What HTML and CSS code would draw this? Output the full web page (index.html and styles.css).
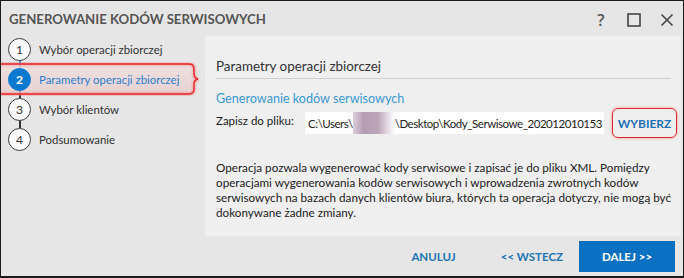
FILE: index.html
```html
<!DOCTYPE html>
<html lang="pl">
<head>
<meta charset="utf-8">
<title>Generowanie kodów serwisowych</title>
<link rel="stylesheet" href="styles.css">
</head>
<body>
<div class="window">
  <header class="titlebar">
    <h1 class="title">GENEROWANIE KODÓW SERWISOWYCH</h1>
    <div class="controls">
      <span class="ctl help">?</span>
      <span class="ctl max"><svg width="14" height="14" viewBox="0 0 14 14"><rect x="1" y="1" width="12" height="12" fill="none" stroke="#444" stroke-width="1.6"/></svg></span>
      <span class="ctl close"><svg width="14" height="14" viewBox="0 0 14 14"><path d="M1.5 1.5 L12.5 12.5 M12.5 1.5 L1.5 12.5" stroke="#444" stroke-width="1.6" fill="none"/></svg></span>
    </div>
  </header>
  <div class="main">
    <nav class="steps">
      <div class="step"><span class="num">1</span><span class="label">Wybór operacji zbiorczej</span></div>
      <div class="link link-done"></div>
      <div class="step active"><span class="num">2</span><span class="label">Parametry operacji zbiorczej</span></div>
      <div class="link"></div>
      <div class="step"><span class="num">3</span><span class="label">Wybór klientów</span></div>
      <div class="link"></div>
      <div class="step"><span class="num">4</span><span class="label">Podsumowanie</span></div>
      <svg class="mark-step" width="206" height="34" viewBox="0 0 206 34">
        <defs>
          <linearGradient id="pink" x1="0" y1="0" x2="0" y2="1">
            <stop offset="0" stop-color="#f1dede"/>
            <stop offset="1" stop-color="#e6cfcf"/>
          </linearGradient>
          <filter id="glow" x="-5%" y="-30%" width="110%" height="160%"><feGaussianBlur stdDeviation="1.2"/></filter>
        </defs>
        <path d="M-4 2 H188 Q193 2 193 7 V12 Q193 16 197 17 Q193 18 193 22 V27 Q193 32 188 32 H-4 Z" fill="url(#pink)" stroke="#f08a8a" stroke-width="3" filter="url(#glow)" opacity="0.8"/>
        <path d="M-4 2 H188 Q193 2 193 7 V12 Q193 16 197 17 Q193 18 193 22 V27 Q193 32 188 32 H-4" fill="none" stroke="#e8282e" stroke-width="1.4"/>
      </svg>
    </nav>
    <section class="panel">
      <h2 class="heading">Parametry operacji zbiorczej</h2>
      <h3 class="subheading">Generowanie kodów serwisowych</h3>
      <div class="file-row">
        <span class="file-label">Zapisz do pliku:</span>
        <div class="file-input"><span>C:\Users\</span><span class="blur"></span><span>\Desktop\Kody_Serwisowe_202012010153</span></div>
        <button class="pick">WYBIERZ</button>
      </div>
      <p class="desc">Operacja pozwala wygenerować kody serwisowe i zapisać je do pliku XML. Pomiędzy operacjami wygenerowania kodów serwisowych i wprowadzenia zwrotnych kodów serwisowych na bazach danych klientów biura, których ta operacja dotyczy, nie mogą być dokonywane żadne zmiany.</p>
    </section>
  </div>
  <footer class="footer">
    <button class="btn-text">ANULUJ</button>
    <button class="btn-text">&lt;&lt; WSTECZ</button>
    <button class="btn-primary">DALEJ &gt;&gt;</button>
  </footer>
</div>
</body>
</html>
```
FILE: styles.css
```css
* { box-sizing: border-box; }
html, body { margin: 0; padding: 0; }
body {
  width: 684px;
  height: 278px;
  font-family: Lato, "Open Sans", sans-serif;
  color: #2b2b2b;
  background: #e6e6e6;
  overflow: hidden;
}
.window {
  width: 684px;
  height: 278px;
  border: 1px solid #1b1b1b;
  border-bottom-width: 2px;
  background: #e6e6e6;
  display: flex;
  flex-direction: column;
}
.titlebar {
  height: 35px;
  flex: none;
  display: flex;
  align-items: center;
  justify-content: space-between;
  padding: 0 9px 0 8px;
}
.title {
  margin: 0;
  font-size: 13.2px;
  font-weight: 700;
  color: #555;
}
.controls {
  display: flex;
  align-items: center;
  gap: 19px;
  padding-top: 2px;
}
.ctl { display: flex; align-items: center; justify-content: center; width: 14px; height: 14px; }
.help { font-size: 16px; font-weight: 600; color: #555; font-family: "Open Sans", sans-serif; }
.main {
  height: 200px;
  flex: none;
  display: flex;
}
.steps {
  width: 204px;
  position: relative;
  padding-top: 2px;
  display: flex;
  flex-direction: column;
}
.step {
  height: 22px;
  display: flex;
  align-items: center;
  position: relative;
  z-index: 1;
}
.num {
  width: 23px;
  height: 23px;
  margin-left: 7px;
  border: 1.5px solid #3a3a3a;
  border-radius: 50%;
  display: flex;
  align-items: center;
  justify-content: center;
  font-size: 12px;
  color: #333;
  background: #fafafa;
  flex: none;
}
.label {
  margin-left: 8px;
  font-size: 11.4px;
  color: #333;
}
.active .num {
  background: #0a7ad0;
  border-color: #0a7ad0;
  color: #fff;
  font-weight: 700;
}
.active .label { color: #2f7fcc; }
.link {
  width: 1.5px;
  height: 8px;
  margin-left: 18px;
  background: #333;
}
.link-done { background: #2a86d6; }
.mark-step {
  position: absolute;
  left: 0;
  top: 26px;
  z-index: 0;
}
.panel {
  width: 476px;
  background: #efefef;
  padding: 0 3px 0 11px;
}
.heading {
  margin: 0 7px 0 0;
  font-size: 13.4px;
  font-weight: 400;
  color: #333;
  line-height: 18px;
  padding: 21px 0 3px;
  border-bottom: 1px solid #cfcfcf;
}
.subheading {
  margin: 12px 0 0;
  font-size: 12.6px;
  font-weight: 400;
  color: #3a9ad4;
  line-height: 16px;
}
.file-row {
  display: flex;
  align-items: center;
  margin-top: 1px;
  height: 30px;
}
.file-label {
  font-size: 11.5px;
  color: #222;
  width: 89px;
  flex: none;
  align-self: flex-start;
  padding-top: 6px;
}
.file-input {
  width: 299px;
  flex: none;
  height: 22px;
  background: #fff;
  display: flex;
  align-items: center;
  padding-left: 3px;
  font-size: 11.5px;
  letter-spacing: -0.46px;
  color: #222;
  white-space: nowrap;
  overflow: hidden;
}
.blur {
  display: inline-block;
  width: 42px;
  height: 22px;
  background: linear-gradient(to right, #ddd0dc 0%, #b49cb2 25%, #bba7b9 60%, #e8e0e8 85%, #ffffff 100%);
  flex: none;
}
.pick {
  margin-left: 8px;
  width: 65px;
  flex: none;
  height: 30px;
  border: 1.5px solid #e02a30;
  border-radius: 6px;
  box-shadow: 0 0 3px rgba(240, 80, 80, 0.6);
  background: transparent;
  font-family: Lato, sans-serif;
  font-size: 12px;
  font-weight: 700;
  color: #1f6fb4;
  padding: 0;
}
.desc {
  margin: 22px 0 0;
  font-size: 11.7px;
  line-height: 15px;
  color: #222;
  width: 462px;
}
.footer {
  flex: 1;
  display: flex;
  align-items: center;
  justify-content: flex-end;
  padding-right: 8px;
}
.btn-text {
  background: none;
  border: none;
  font-family: Lato, sans-serif;
  font-size: 11.5px;
  font-weight: 700;
  color: #2474b4;
  padding: 0;
  margin-right: 45px;
}
.btn-text + .btn-text { margin-right: 16px; }
.btn-primary {
  width: 96px;
  height: 31px;
  border: none;
  background: #0a70c2;
  color: #fff;
  font-family: Lato, sans-serif;
  font-size: 11.5px;
  font-weight: 700;
  padding: 0;
}
```
